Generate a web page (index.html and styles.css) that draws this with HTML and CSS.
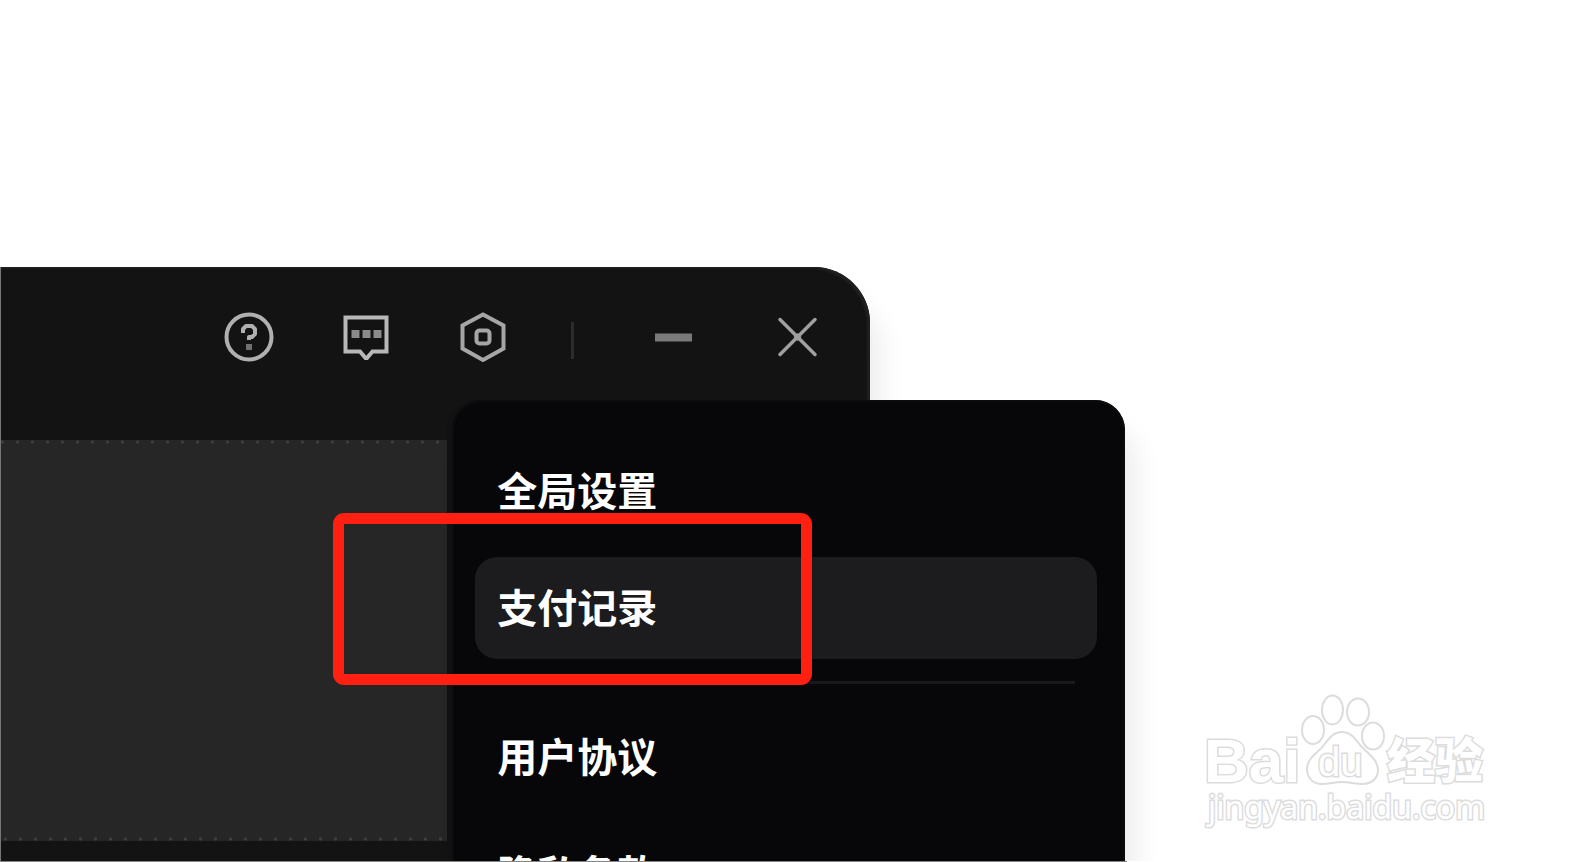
FILE: index.html
```html
<!DOCTYPE html>
<html lang="zh-CN">
<head>
<meta charset="utf-8">
<title>全局设置</title>
<link rel="stylesheet" href="styles.css">
</head>
<body>
<main class="stage">
  <section class="window">
    <header class="titlebar">
      <button class="tool" type="button" aria-label="帮助">
        <svg viewBox="0 0 50 50" fill="none" stroke="#b0b0b0" stroke-width="4">
          <circle cx="25" cy="25" r="22.5"/>
          <path d="M19 21v-4l3-3h6l3 3v5l-3 3h-3v3" stroke-width="4" stroke-linejoin="round"/>
          <path d="M25 32v6" stroke="#707070" stroke-width="6"/>
        </svg>
      </button>
      <button class="tool" type="button" aria-label="反馈">
        <svg viewBox="0 0 50 50" fill="none" stroke="#b8b8b8" stroke-width="4">
          <path d="M4.500 5.500h41v34h-14l-5.500 6.500h-1.500l-5.500-6.500H4.500z"/>
          <path d="M10.500 22h8M21.500 22h8M32.500 22h8" stroke="#8a8a8a" stroke-width="8"/>
        </svg>
      </button>
      <button class="tool" type="button" aria-label="设置">
        <svg viewBox="0 0 50 50" fill="none" stroke="#a6a6a6" stroke-width="4">
          <path d="M25 2.500l20.500 11v23L25 48 4.500 36.500v-23z"/>
          <rect x="18.500" y="18.500" width="13" height="13" rx="3"/>
        </svg>
      </button>
      <span class="separator"></span>
      <button class="tool minimize" type="button" aria-label="最小化">
        <svg viewBox="0 0 50 50"><path d="M7 25.500h37" stroke="#7a7a7a" stroke-width="8"/></svg>
      </button>
      <button class="tool" type="button" aria-label="关闭">
        <svg viewBox="0 0 50 50"><path d="M7 7.500l35 35M42 7.500L7 42.500" stroke="#a0a0a0" stroke-width="3.500" stroke-linecap="round"/><path d="M20.500 25l4-4 4 4-4 4z" fill="#a0a0a0"/></svg>
      </button>
    </header>
    <div class="panel"></div>
    <nav class="menu">
      <button class="item" type="button">全局设置</button>
      <button class="item active" type="button">支付记录</button>
      <hr class="divider">
      <button class="item" type="button">用户协议</button>
      <button class="item" type="button">隐私条款</button>
    </nav>
    <div class="highlight"></div>
  </section>
  <svg class="watermark" viewBox="0 0 300 140" role="img" aria-label="Baidu 经验">
    <ellipse cx="113" cy="38" rx="11" ry="14"/>
    <ellipse cx="132.500" cy="18" rx="10.500" ry="14.500"/>
    <ellipse cx="158" cy="20" rx="11" ry="13.500"/>
    <ellipse cx="173" cy="44" rx="11" ry="13.500"/>
    <path d="M142 40c8 0 12 5 18 13 6 7 18 14 18 25 0 9-7 14-16 14-8 0-12-2-20-2s-12 2-20 2c-9 0-15-6-15-15 0-11 11-16 17-24 6-8 10-13 18-13z"/>
    <text class="latin" x="4" y="90">Bai</text>
    <text class="paw" x="118" y="84">du</text>
    <text class="cjk" x="187" y="86">经验</text>
    <text class="site" x="8" y="127">jingyan.baidu.com</text>
  </svg>
</main>
</body>
</html>
```
FILE: styles.css
```css
* { box-sizing: border-box; }

body {
  margin: 0;
  background: #fff;
  font-family: "Noto Sans CJK SC", sans-serif;
}

.stage {
  position: relative;
  height: 100vh;
  padding-top: 267px;
  overflow: hidden;
  border-bottom: 1px solid #858585;
  border-image: linear-gradient(to right, #858585 71.7%, #fff 71.7%) 1;
}

.window {
  position: relative;
  display: flex;
  flex-direction: column;
  width: 55.4%;
  height: 100%;
  border-left: 1px solid #777;
  border-top-right-radius: 56px;
  background: #131313;
  box-shadow: inset -3px 2px 2px #202020, 10px 28px 28px rgba(0, 0, 0, 0.08);
}

.titlebar {
  display: flex;
  justify-content: flex-end;
  align-items: flex-start;
  height: 173px;
  padding: 45px 47px 0 0;
}

.tool {
  width: 50px;
  height: 50px;
  margin-left: 67px;
  padding: 0;
  border: 0;
  background: none;
}

.tool svg { display: block; }

.separator {
  width: 3px;
  height: 37px;
  margin: 10px 7px 0 63px;
  background: #2c2c2c;
}

.minimize { margin-right: 8px; }

.panel {
  flex: 1;
  margin-bottom: 20px;
  background:
    radial-gradient(circle, #404040 1px, transparent 2px) 9px 0 / 15px 4px repeat-x,
    radial-gradient(circle, #404040 1px, transparent 2px) 12px 100% / 15px 4px repeat-x,
    #262626;
}

.menu {
  position: absolute;
  top: 133px;
  right: -255px;
  width: 673px;
  height: 600px;
  padding: 40px 28px 0 23px;
  border-radius: 30px;
  background: #070709;
  box-shadow: inset 0 0 2px 2px #0d0d0e, -5px 0 0 #111, 10px 28px 28px rgba(0, 0, 0, 0.08);
}

.item {
  display: block;
  width: 100%;
  height: 102px;
  margin-bottom: 15px;
  padding: 0 22px 4px;
  border: 0;
  border-radius: 22px;
  background: none;
  color: #fff;
  font: 700 40px/58px "Noto Sans CJK SC", sans-serif;
  text-align: left;
}

.active { background: #1c1c1e; }

.divider {
  height: 3px;
  margin: 22px;
  border: 0;
  background: #19191b;
}

.highlight {
  position: absolute;
  top: 246px;
  right: 58px;
  width: 479px;
  height: 172px;
  border: 11px solid #ff2012;
  border-radius: 11px;
}

.watermark {
  position: absolute;
  right: 71px;
  bottom: 29px;
  width: 300px;
  height: 140px;
  fill: #fff;
  stroke: #dcdcdc;
  stroke-width: 2px;
}

.watermark text {
  paint-order: stroke;
  stroke-width: 3px;
}

.latin { font: 700 62px "Liberation Sans", sans-serif; }
.paw { font: 400 40px "Liberation Sans", sans-serif; }
.cjk { font: 900 48px "Noto Sans CJK SC", sans-serif; }
.site { font: 400 32px "Noto Sans", sans-serif; }
```
